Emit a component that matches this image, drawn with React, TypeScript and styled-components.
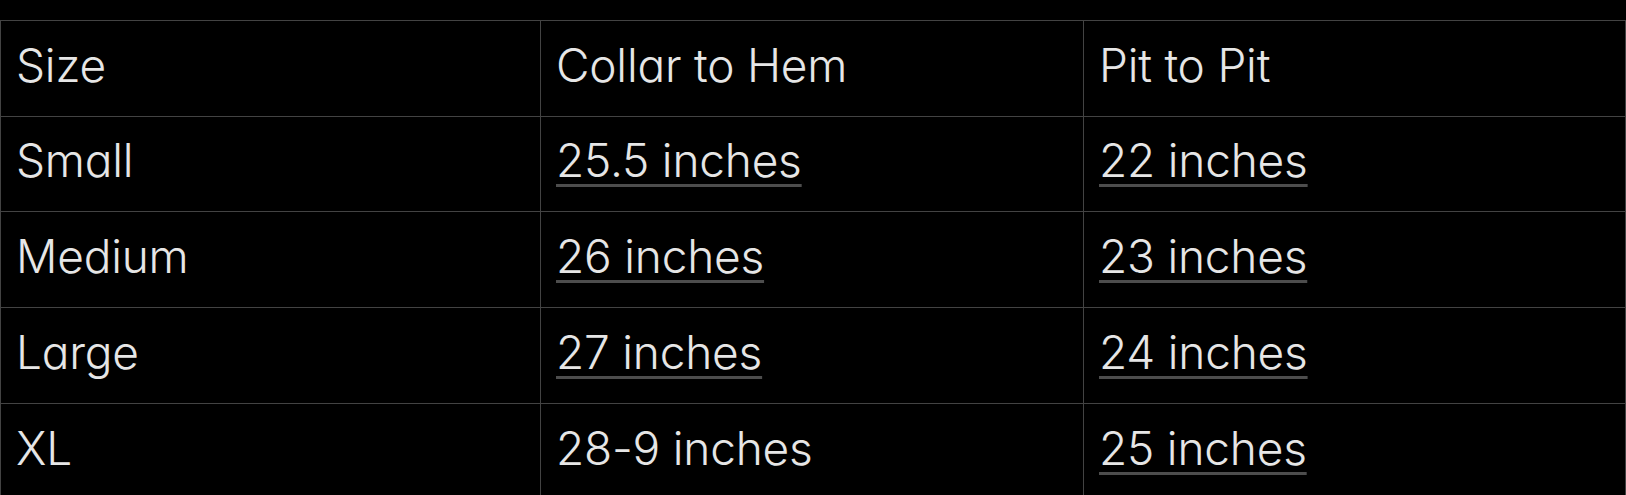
import React from "react";
import styled, { createGlobalStyle } from "styled-components";

const GlobalStyle = createGlobalStyle`
  html, body {
    margin: 0;
    padding: 0;
    background: #000;
  }
`;

const Page = styled.div`
  padding-top: 20px;
  background: #000;
  min-height: 495px;
  box-sizing: border-box;
`;

const Table = styled.table`
  width: 100%;
  table-layout: fixed;
  border-collapse: collapse;
  font-family: Inter, "Noto Sans", sans-serif;
  font-feature-settings: "cv11" 1;
  font-size: 46px;
  font-weight: 350;
  letter-spacing: -0.2px;
  color: #e6e6e6;
`;

const Col = styled.col<{ $w?: number }>`
  width: ${(p) => (p.$w ? `${p.$w}px` : "auto")};
`;

const Cell = styled.td`
  border: 1px solid #434343;
  padding: 7.8px 15px 14.9px;
  line-height: 72px;
  text-align: left;
  white-space: nowrap;
`;

const HeadCell = styled(Cell).attrs({ as: "th" })`
  font-weight: 350;
`;

const Measure = styled.a`
  color: inherit;
  text-decoration: underline;
  text-decoration-color: #4d4d4d;
  text-decoration-thickness: 3px;
  text-underline-offset: 7px;
`;

type Row = { size: string; length: string; width: string; lengthLink: boolean };

const rows: Row[] = [
  { size: "Small", length: "25.5 inches", width: "22 inches", lengthLink: true },
  { size: "Medium", length: "26 inches", width: "23 inches", lengthLink: true },
  { size: "Large", length: "27 inches", width: "24 inches", lengthLink: true },
  { size: "XL", length: "28-9 inches", width: "25 inches", lengthLink: false },
];

export default function App() {
  return (
    <Page>
      <GlobalStyle />
      <Table>
        <colgroup>
          <Col $w={540} />
          <Col $w={543} />
          <Col />
        </colgroup>
        <thead>
          <tr>
            <HeadCell>Size</HeadCell>
            <HeadCell>Collar to Hem</HeadCell>
            <HeadCell>Pit to Pit</HeadCell>
          </tr>
        </thead>
        <tbody>
          {rows.map((r) => (
            <tr key={r.size}>
              <Cell>{r.size}</Cell>
              <Cell>{r.lengthLink ? <Measure>{r.length}</Measure> : r.length}</Cell>
              <Cell>
                <Measure>{r.width}</Measure>
              </Cell>
            </tr>
          ))}
        </tbody>
      </Table>
    </Page>
  );
}
